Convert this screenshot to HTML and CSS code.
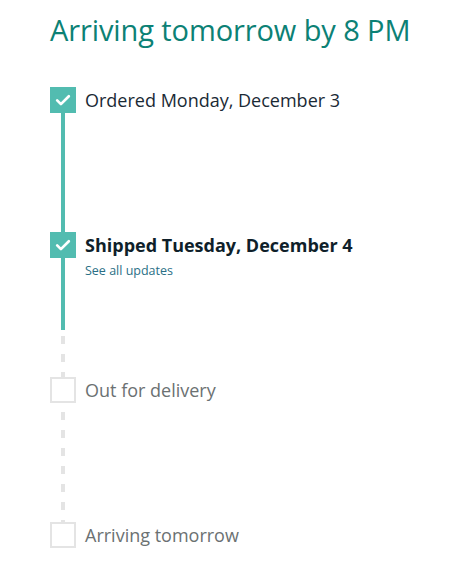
FILE: index.html
```html
<!DOCTYPE html>
<html lang="en">
<head>
    <meta charset="UTF-8">
    <title>Order Tracking</title>
    <link rel="stylesheet" href="styles.css">
</head>
<body>
    <div class="tracker">
        <h1 class="eta">Arriving tomorrow by 8 PM</h1>
        <ol class="steps">
            <li class="step done">
                <div class="marker">
                    <span class="box"><svg viewBox="0 0 24 24" width="20" height="20"><path d="M5 12.5l4.5 4.5L19 7.5" fill="none" stroke="#fff" stroke-width="3.2" stroke-linecap="round" stroke-linejoin="round"/></svg></span>
                    <span class="line solid"></span>
                </div>
                <div class="label">
                    <div class="title">Ordered Monday, December 3</div>
                </div>
            </li>
            <li class="step done current">
                <div class="marker">
                    <span class="box"><svg viewBox="0 0 24 24" width="20" height="20"><path d="M5 12.5l4.5 4.5L19 7.5" fill="none" stroke="#fff" stroke-width="3.2" stroke-linecap="round" stroke-linejoin="round"/></svg></span>
                    <span class="line partial"></span>
                </div>
                <div class="label">
                    <div class="title">Shipped Tuesday, December 4</div>
                    <a class="updates" href="#">See all updates</a>
                </div>
            </li>
            <li class="step">
                <div class="marker">
                    <span class="box"></span>
                    <span class="line dashed"></span>
                </div>
                <div class="label">
                    <div class="title">Out for delivery</div>
                </div>
            </li>
            <li class="step last">
                <div class="marker">
                    <span class="box"></span>
                </div>
                <div class="label">
                    <div class="title">Arriving tomorrow</div>
                </div>
            </li>
        </ol>
    </div>
</body>
</html>
```

FILE: styles.css
```css
body {
    font-family: "Open Sans", Arial, sans-serif;
    background-color: #fff;
    color: #0f1111;
    margin: 0;
    padding: 0;
}

.tracker {
    padding: 12px 0 0 50px;
}

.eta {
    margin: 0 0 39px;
    font-size: 29px;
    font-weight: 400;
    line-height: 36px;
    color: #0c8175;
    letter-spacing: -0.1px;
}

.steps {
    list-style: none;
    margin: 0;
    padding: 0;
}

.step {
    display: flex;
    height: 145px;
}

.step.last {
    height: 40px;
}

.marker {
    width: 26px;
    display: flex;
    flex-direction: column;
    align-items: center;
}

.box {
    width: 26px;
    height: 26px;
    box-sizing: border-box;
    border: 2px solid #e4e4e4;
    display: flex;
    align-items: center;
    justify-content: center;
    flex-shrink: 0;
}

.done .box {
    background-color: #52bcb0;
    border-color: #52bcb0;
}

.line {
    width: 4px;
    flex: 1;
}

.line.solid {
    background-color: #52bcb0;
}

.line.partial {
    background:
        linear-gradient(#52bcb0, #52bcb0) top / 4px 72px no-repeat,
        repeating-linear-gradient(#e4e4e4 0 8px, transparent 8px 18px) 0 78px / 4px 100% no-repeat;
}

.line.dashed {
    background: repeating-linear-gradient(#e4e4e4 0 8px, transparent 8px 18px) 0 9px / 4px 100% no-repeat;
}

.label {
    padding-left: 9px;
}

.title {
    font-size: 18px;
    line-height: 26px;
    color: #1a2a35;
}

.current .title {
    font-weight: 700;
    color: #0f1f2a;
}

.step:not(.done) .title {
    color: #6b7172;
}

.updates {
    display: block;
    margin-top: 4px;
    font-size: 12.5px;
    line-height: 18px;
    color: #2a6f86;
    text-decoration: none;
}
```
